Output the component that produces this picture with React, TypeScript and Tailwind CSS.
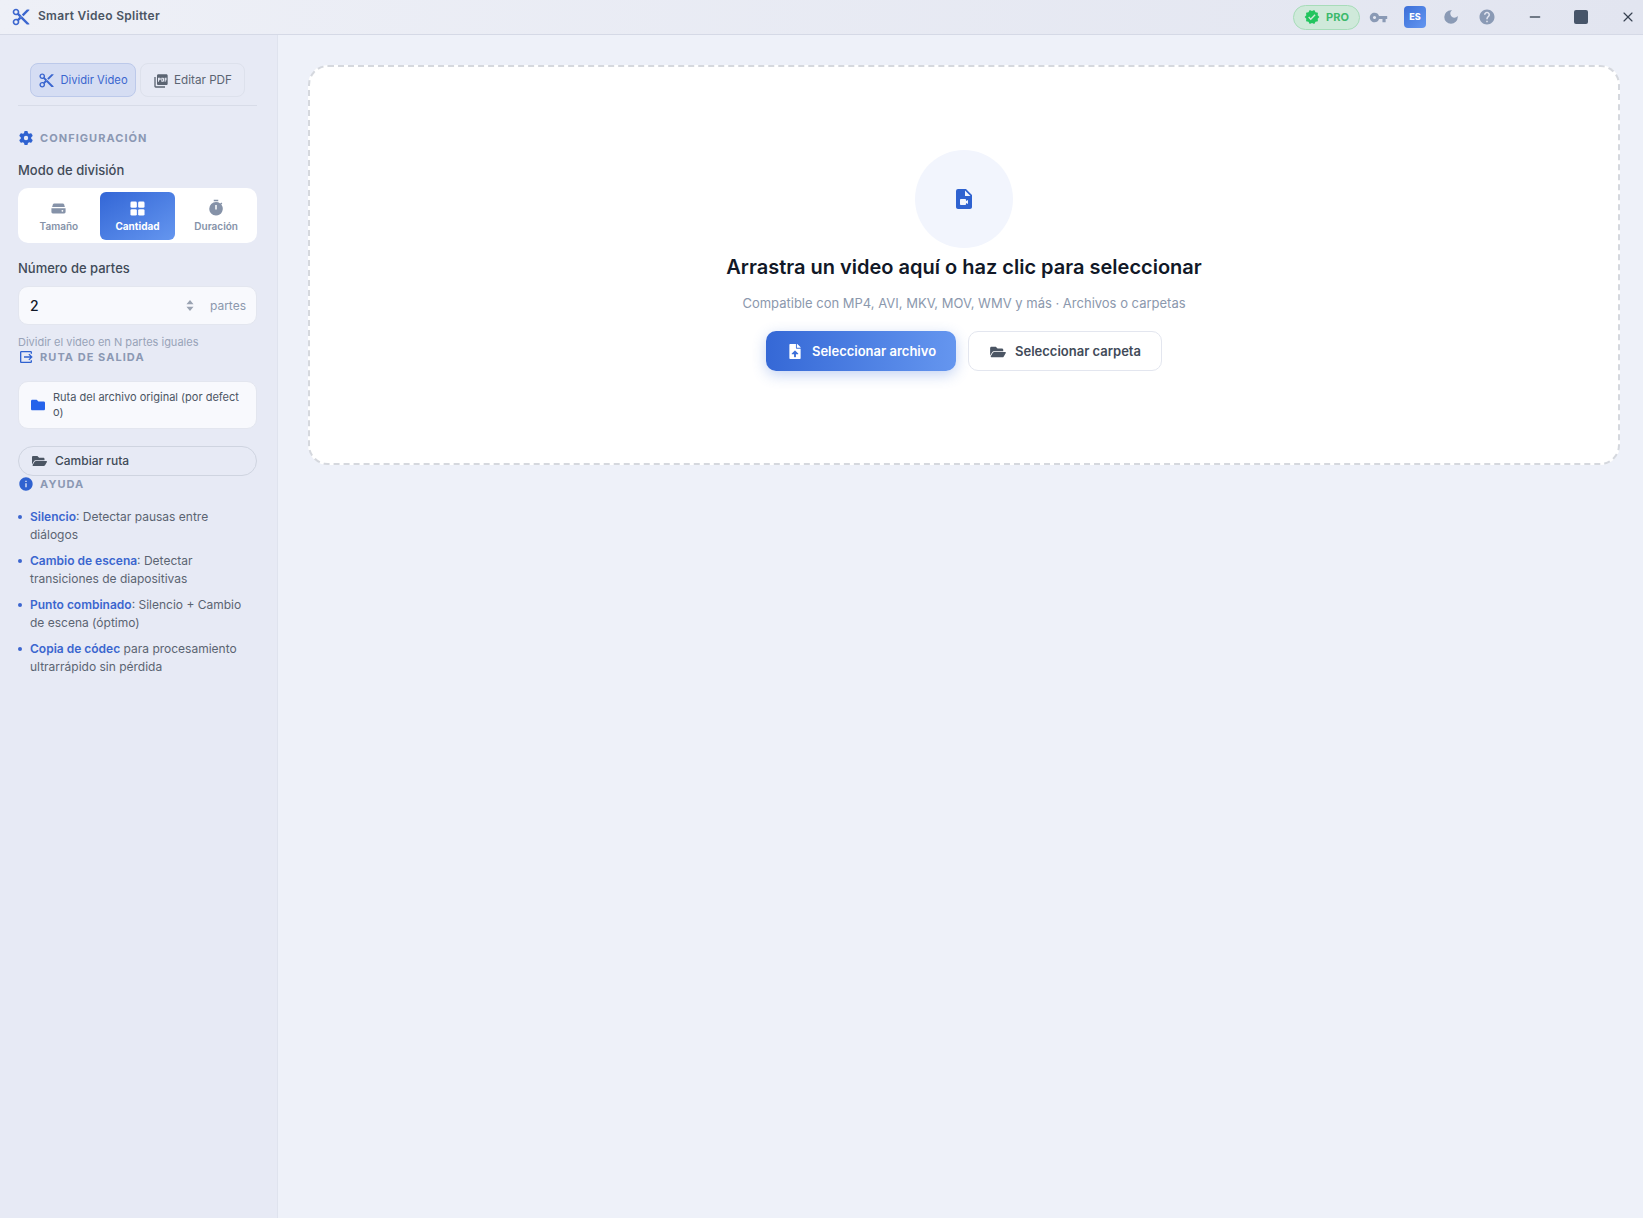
import { Minus, X } from 'lucide-react';
import { FaFileUpload, FaFolder, FaFolderOpen } from 'react-icons/fa';
import { FaGear } from 'react-icons/fa6';
import {
  MdContentCut,
  MdDarkMode,
  MdHelp,
  MdInfo,
  MdOutlineOutput,
  MdPictureAsPdf,
  MdTimer,
  MdVerified,
  MdVideoFile,
  MdVpnKey,
} from 'react-icons/md';

const helpItems = [
  { strong: 'Silencio', rest: ': Detectar pausas entre diálogos' },
  { strong: 'Cambio de escena', rest: ': Detectar transiciones de diapositivas' },
  { strong: 'Punto combinado', rest: ': Silencio + Cambio de escena (óptimo)' },
  { strong: 'Copia de códec', rest: ' para procesamiento ultrarrápido sin pérdida' },
];

function TitleBar() {
  return (
    <header className="flex h-[35px] shrink-0 items-center border-b border-[#d5d9e6] bg-gradient-to-r from-[#eef0f7] to-[#e2e5f0] pl-[11px]">
      <MdContentCut className="h-[20px] w-[20px] text-[#3b66cf]" />
      <span className="mb-[2px] ml-[7px] text-[12px] font-semibold tracking-[0.3px] text-[#4b5563]">Smart Video Splitter</span>
      <div className="ml-auto flex h-full items-center">
        <div className="flex h-[25px] w-[67px] items-center justify-center gap-[6px] rounded-full border border-[#a7dcb9] bg-[#cfe9da] text-[11px] font-bold text-[#3cb96c]">
          <MdVerified className="h-[16px] w-[16px] text-[#22c55e]" />
          PRO
        </div>
        <MdVpnKey className="ml-[9px] h-[19px] w-[19px] text-[#8a9ab5]" />
        <div className="ml-[16px] flex h-[22px] w-[22px] items-center justify-center rounded-[4px] bg-gradient-to-br from-[#3b6fd8] to-[#6496f0] text-[9px] font-extrabold text-white">
          ES
        </div>
        <MdDarkMode className="ml-[16px] h-[18px] w-[18px] text-[#8a9ab5]" />
        <MdHelp className="ml-[18px] h-[18px] w-[18px] text-[#8a9ab5]" />
        <Minus className="ml-[31px] h-[16px] w-[16px] text-[#4b5563]" strokeWidth={2} />
        <div className="ml-[31px] h-[14px] w-[14px] rounded-[2px] bg-[#475569]" />
        <X className="ml-[32px] mr-[7px] h-[16px] w-[16px] text-[#374151]" strokeWidth={1.75} />
      </div>
    </header>
  );
}

function SectionTitle({ icon, label }: { icon: React.ReactNode; label: string }) {
  return (
    <div className="flex h-[14px] items-center text-[#2f62d0]">
      <span className="flex w-[16px] justify-center">{icon}</span>
      <span className="ml-[6px] text-[11px] font-bold tracking-[1.05px] text-[#8b98b3]">{label}</span>
    </div>
  );
}

function DriveIcon() {
  return (
    <svg viewBox="0 0 24 24" className="h-[17px] w-[17px]" fill="currentColor">
      <path d="M6 5h12a2 2 0 0 1 1.9 1.4L21 10H3l1.100-3.600A2 2 0 0 1 6 5z" />
      <path fillRule="evenodd" d="M2 11.500h20V17a2 2 0 0 1-2 2H4a2 2 0 0 1-2-2zM17.500 14a1.300 1.300 0 1 0 0 2.600 1.300 1.300 0 0 0 0-2.600z" />
    </svg>
  );
}

function GridIcon() {
  return (
    <svg viewBox="0 0 16 16" className="h-[15px] w-[15px]" fill="currentColor">
      <rect x="0.500" y="0.500" width="6.800" height="6.800" rx="1.500" />
      <rect x="8.700" y="0.500" width="6.800" height="6.800" rx="1.500" />
      <rect x="0.500" y="8.700" width="6.800" height="6.800" rx="1.500" />
      <rect x="8.700" y="8.700" width="6.800" height="6.800" rx="1.500" />
    </svg>
  );
}

function Sidebar() {
  return (
    <aside className="w-[278px] shrink-0 border-r border-[#dfe3ee] bg-[#e7eaf5] pl-[18px] pr-[20px]">
      <div className="flex gap-[4px] border-b border-[#d8dce8] pb-[8px] pl-[12px] pt-[28px]">
        <button className="flex h-[34px] w-[106px] items-center justify-center gap-[5px] rounded-[8px] border border-[#bcc9ea] bg-[#d5ddf3] pt-[1px] text-[11.2px] text-[#3b66cf]">
          <MdContentCut className="h-[17px] w-[17px]" />
          Dividir Video
        </button>
        <button className="flex h-[34px] w-[105px] items-center justify-center gap-[5px] rounded-[8px] border border-[#dde1ec] pt-[1px] text-[11.7px] text-[#5b6472]">
          <MdPictureAsPdf className="h-[16px] w-[16px]" />
          Editar PDF
        </button>
      </div>

      <div className="mt-[25px]">
        <SectionTitle icon={<FaGear className="h-[14px] w-[14px]" />} label="CONFIGURACIÓN" />
      </div>
      <p className="mt-[16px] text-[13px] font-medium leading-[18px] text-[#414a58]">Modo de división</p>
      <div className="mt-[9px] grid h-[55px] grid-cols-3 items-center gap-[3px] rounded-[10px] bg-white px-[3px]">
        <div className="flex flex-col items-center pt-[2px] text-[#8592a8]">
          <DriveIcon />
          <span className="mt-[2px] text-[10px] font-semibold">Tamaño</span>
        </div>
        <div className="flex h-[48px] flex-col items-center justify-center rounded-[6px] bg-gradient-to-br from-[#3366d6] to-[#6596ef] pt-[3px] text-white">
          <GridIcon />
          <span className="mt-[3px] text-[10px] font-bold">Cantidad</span>
        </div>
        <div className="flex flex-col items-center pt-[1px] text-[#8592a8]">
          <MdTimer className="h-[18px] w-[18px]" />
          <span className="mt-[2px] text-[10px] font-semibold">Duración</span>
        </div>
      </div>

      <p className="mt-[16px] text-[13px] font-medium leading-[18px] text-[#414a58]">Número de partes</p>
      <div className="mt-[9px] flex h-[39px] items-center rounded-[10px] border border-[#e3e6ef] bg-[#f8f9fd] pl-[11px] pr-[10px]">
        <span className="text-[14px] font-medium text-[#111827]">2</span>
        <svg viewBox="0 0 10 14" className="ml-auto h-[11px] w-[8px] text-[#9aa3b2]" fill="currentColor">
          <path d="M5 0l4.500 5.500h-9zM5 14L.5 8.500h9z" />
        </svg>
        <span className="ml-[16px] text-[12px] text-[#8b98ad]">partes</span>
      </div>
      <p className="mt-[10px] text-[11px] leading-[14px] text-[#98a3b8]">Dividir el video en N partes iguales</p>
      <div className="mt-[1px]">
        <SectionTitle icon={<MdOutlineOutput className="h-[16px] w-[16px]" />} label="RUTA DE SALIDA" />
      </div>

      <div className="mt-[17px] flex h-[48px] items-center rounded-[10px] border border-[#e3e6ef] bg-[#f8f9fd] pl-[12px] pr-[10px]">
        <FaFolder className="h-[14px] w-[14px] shrink-0 text-[#2563eb]" />
        <span className="ml-[8px] break-all text-[11px] leading-[15px] text-[#4b5563]">Ruta del archivo original (por defecto)</span>
      </div>
      <button className="mt-[17px] flex h-[30px] w-full items-center rounded-full border border-[#cfd4e0] bg-[#e7eaf5] pl-[13px] text-[12px] font-medium text-[#414a58]">
        <FaFolderOpen className="h-[14px] w-[15px] text-[#4b5563]" />
        <span className="ml-[8px]">Cambiar ruta</span>
      </button>
      <div className="mt-[1px]">
        <SectionTitle icon={<MdInfo className="h-[16px] w-[16px]" />} label="AYUDA" />
      </div>

      <ul className="mt-[17px] flex flex-col gap-[8px]">
        {helpItems.map((item) => (
          <li key={item.strong} className="relative pl-[12px] text-[12px] leading-[18px] text-[#5b6472]">
            <span className="absolute left-0 top-[7px] h-[4px] w-[4px] rounded-full bg-[#3b66cf]" />
            <span className="font-semibold text-[#3b66cf]">{item.strong}</span>
            {item.rest}
          </li>
        ))}
      </ul>
    </aside>
  );
}

function DropZone() {
  return (
    <section className="flex h-[400px] flex-col items-center rounded-[20px] border-2 border-dashed border-[#d5d8de] bg-white pt-[83px]">
      <div className="flex h-[98px] w-[98px] items-center justify-center rounded-full bg-[#f2f5fd]">
        <MdVideoFile className="h-[24px] w-[24px] text-[#2f62d0]" />
      </div>
      <h1 className="mt-[4px] text-[20px] font-semibold leading-[30px] text-[#111827]">
        Arrastra un video aquí o haz clic para seleccionar
      </h1>
      <p className="mt-[11px] text-[13px] leading-[20px] text-[#8b98ad]">
        Compatible con MP4, AVI, MKV, MOV, WMV y más · Archivos o carpetas
      </p>
      <div className="mt-[18px] flex gap-[12px]">
        <button className="flex h-[40px] w-[190px] items-center justify-center gap-[11px] rounded-[10px] bg-gradient-to-r from-[#3568d6] to-[#6596ef] pl-[3px] pt-[1px] text-[13px] font-semibold text-white shadow-[0_4px_14px_rgba(59,110,214,0.3)]">
          <FaFileUpload className="h-[15px] w-[12px]" />
          Seleccionar archivo
        </button>
        <button className="flex h-[40px] w-[194px] items-center justify-center gap-[9px] rounded-[10px] border border-[#e3e6ef] bg-white pl-[1px] pt-[1px] text-[13px] font-semibold text-[#414a58]">
          <FaFolderOpen className="h-[14px] w-[16px] text-[#4b5563]" />
          Seleccionar carpeta
        </button>
      </div>
    </section>
  );
}

export default function App() {
  return (
    <div className="flex h-screen flex-col overflow-hidden bg-[#eef1f9] font-['Inter',sans-serif]">
      <TitleBar />
      <div className="flex min-h-0 flex-1">
        <Sidebar />
        <main className="flex-1 pl-[30px] pr-[23px] pt-[30px]">
          <DropZone />
        </main>
      </div>
    </div>
  );
}
